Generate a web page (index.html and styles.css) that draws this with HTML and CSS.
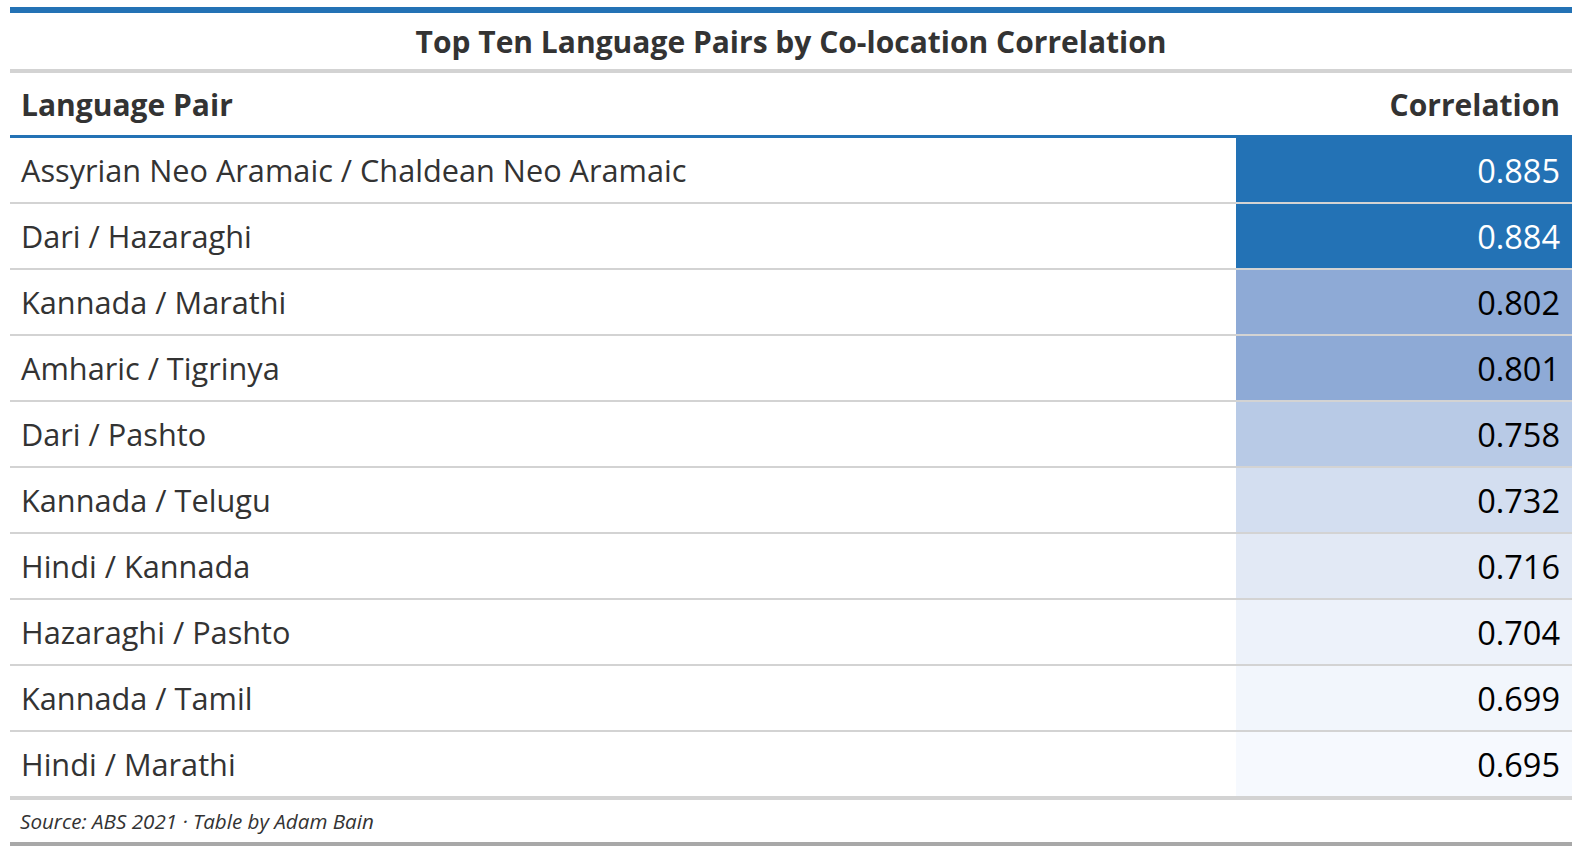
FILE: index.html
```html
<!DOCTYPE html>
<html lang="en">
<head>
<meta charset="utf-8">
<title>Top Ten Language Pairs by Co-location Correlation</title>
<link rel="stylesheet" href="styles.css">
</head>
<body>
<div class="gt">
  <div class="title">Top Ten Language Pairs by Co-location Correlation</div>
  <div class="head">
    <div class="cell-label">Language Pair</div>
    <div class="cell-num">Correlation</div>
  </div>
  <div class="row"><div class="cell-label">Assyrian Neo Aramaic / Chaldean Neo Aramaic</div><div class="cell-num c1 dark">0.885</div></div>
  <div class="row"><div class="cell-label">Dari / Hazaraghi</div><div class="cell-num c1 dark">0.884</div></div>
  <div class="row"><div class="cell-label">Kannada / Marathi</div><div class="cell-num c2">0.802</div></div>
  <div class="row"><div class="cell-label">Amharic / Tigrinya</div><div class="cell-num c2">0.801</div></div>
  <div class="row"><div class="cell-label">Dari / Pashto</div><div class="cell-num c3">0.758</div></div>
  <div class="row"><div class="cell-label">Kannada / Telugu</div><div class="cell-num c4">0.732</div></div>
  <div class="row"><div class="cell-label">Hindi / Kannada</div><div class="cell-num c5">0.716</div></div>
  <div class="row"><div class="cell-label">Hazaraghi / Pashto</div><div class="cell-num c6">0.704</div></div>
  <div class="row"><div class="cell-label">Kannada / Tamil</div><div class="cell-num c7">0.699</div></div>
  <div class="row last"><div class="cell-label">Hindi / Marathi</div><div class="cell-num c8">0.695</div></div>
  <div class="foot">Source: ABS 2021 · Table by Adam Bain</div>
</div>
</body>
</html>
```

FILE: styles.css
```css
html, body {
  margin: 0;
  padding: 0;
  background: #ffffff;
}

body {
  font-family: "Open Sans", "Noto Sans", "Liberation Sans", sans-serif;
  color: #333333;
}

.gt {
  width: 1562px;
  margin: 7px 0 0 10px;
  border-top: 6px solid #2372b5;
  border-bottom: 4px solid #a8a8a8;
}

.title {
  height: 56px;
  display: flex;
  align-items: center;
  justify-content: center;
  border-bottom: 4px solid #d3d3d3;
  font-size: 30px;
  font-weight: 700;
  color: #333333;
}

.head,
.row {
  display: grid;
  grid-template-columns: 1fr 336px;
}

.head {
  height: 62px;
  border-bottom: 3px solid #2372b5;
  font-size: 30px;
  font-weight: 700;
  align-items: center;
}

.row {
  height: 64px;
  border-bottom: 2px solid #d3d3d3;
  font-size: 30.7px;
}

.row.last {
  border-bottom-width: 4px;
}

.cell-label {
  padding-left: 11px;
  display: flex;
  align-items: center;
}

.cell-num {
  padding-right: 12px;
  display: flex;
  align-items: center;
  justify-content: flex-end;
  color: #000000;
}

.row .cell-num {
  font-size: 32.5px;
}

.head .cell-num {
  color: #333333;
}

.dark { color: #ffffff; }

.c1 { background: #2372b5; }
.c2 { background: #8eaad6; }
.c3 { background: #b8cae6; }
.c4 { background: #d3def0; }
.c5 { background: #e2e9f5; }
.c6 { background: #edf2fa; }
.c7 { background: #f2f6fc; }
.c8 { background: #f6f9fe; }

.foot {
  height: 42px;
  display: flex;
  align-items: center;
  padding-left: 10px;
  font-size: 20.6px;
  font-style: italic;
  color: #333333;
}
```
